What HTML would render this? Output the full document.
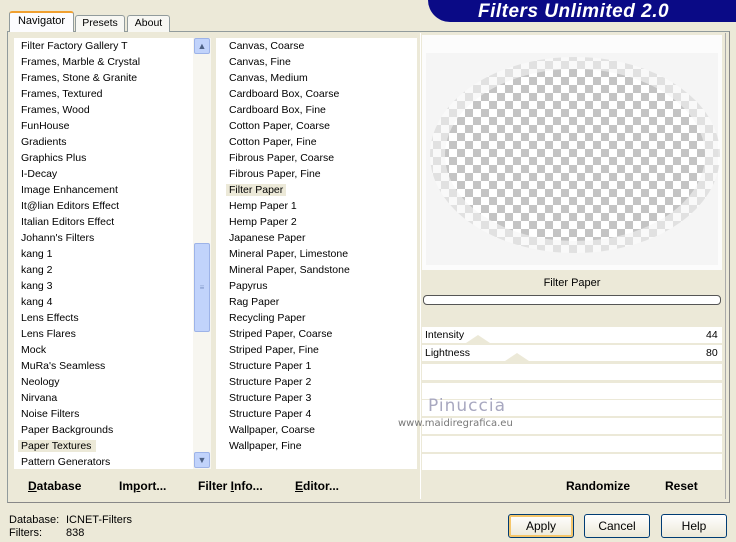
<!DOCTYPE html>
<html><head><style>
*{margin:0;padding:0;box-sizing:border-box}
body{width:736px;height:542px;background:#ece9d8;font-family:"Liberation Sans",sans-serif;font-size:11px;color:#000;position:relative;overflow:hidden}
.a{position:absolute}
.tab{position:absolute;top:15px;height:17px;border:1px solid #919b9c;border-bottom:none;background:#f7f7f3;font-size:11px;text-align:center;line-height:15px;border-radius:3px 3px 0 0}
.list div{height:16px;line-height:16px;padding-left:7px;white-space:nowrap;font-size:10.5px}
.b{font-weight:bold;font-size:12px}
.btn{position:absolute;top:514px;width:66px;height:24px;border:1px solid #003c74;border-radius:3px;background:linear-gradient(#fff,#ece9d8);text-align:center;line-height:22px;font-size:12px}
.row{position:absolute;left:422px;width:300px;background:#fff;height:16px}
</style></head><body>
<div class="a" style="left:428px;top:0;width:308px;height:22px;background:#0a0a86;border-radius:0 0 0 28px"></div>
<div class="a" style="left:478px;top:1px;color:#fff;font-weight:bold;font-style:italic;font-size:19px;letter-spacing:0.5px;line-height:22px">Filters Unlimited 2.0</div>
<div class="a" style="left:7px;top:31px;width:723px;height:472px;border:1px solid #919b9c;border-right-color:#888;border-bottom-color:#888;background:#ece9d8"></div>
<div class="tab" style="left:9px;top:11px;width:65px;height:21px;background:#fcfcfe;border-top:2px solid #f0a030;border-bottom:none;z-index:2;line-height:16px">Navigator</div>
<div class="tab" style="left:75px;width:50px;font-size:10.5px">Presets</div>
<div class="tab" style="left:127px;width:43px;font-size:10.5px">About</div>
<div class="a list" style="left:14px;top:38px;width:179px;height:431px;background:#fff">
<div>Filter Factory Gallery T</div><div>Frames, Marble &amp; Crystal</div><div>Frames, Stone &amp; Granite</div><div>Frames, Textured</div><div>Frames, Wood</div><div>FunHouse</div><div>Gradients</div><div>Graphics Plus</div><div>I-Decay</div><div>Image Enhancement</div><div>It@lian Editors Effect</div><div>Italian Editors Effect</div><div>Johann's Filters</div><div>kang 1</div><div>kang 2</div><div>kang 3</div><div>kang 4</div><div>Lens Effects</div><div>Lens Flares</div><div>Mock</div><div>MuRa's Seamless</div><div>Neology</div><div>Nirvana</div><div>Noise Filters</div><div>Paper Backgrounds</div><div><span style="background:#ece9d8;padding:0 5px 0 3px;margin-left:-3px">Paper Textures</span></div><div>Pattern Generators</div>
</div>
<div class="a" style="left:193px;top:38px;width:18px;height:431px;background:#f7f6f0"></div>
<div class="a" style="left:194px;top:38px;width:16px;height:16px;background:#c1d3fb;border:1px solid #9db3e8;border-radius:2px;color:#4d6185;font-size:9px;text-align:center;line-height:14px">&#9650;</div>
<div class="a" style="left:194px;top:243px;width:16px;height:89px;background:#c1d3fb;border:1px solid #9db3e8;border-radius:2px;color:#7f96c8;font-size:8px;text-align:center;line-height:87px">&#8801;</div>
<div class="a" style="left:194px;top:452px;width:16px;height:16px;background:#c1d3fb;border:1px solid #9db3e8;border-radius:2px;color:#4d6185;font-size:9px;text-align:center;line-height:14px">&#9660;</div>
<div class="a list" style="left:216px;top:38px;width:201px;height:431px;background:#fff;padding-left:6px">
<div>Canvas, Coarse</div><div>Canvas, Fine</div><div>Canvas, Medium</div><div>Cardboard Box, Coarse</div><div>Cardboard Box, Fine</div><div>Cotton Paper, Coarse</div><div>Cotton Paper, Fine</div><div>Fibrous Paper, Coarse</div><div>Fibrous Paper, Fine</div><div><span style="background:#ece9d8;padding:0 3px;margin-left:-3px">Filter Paper</span></div><div>Hemp Paper 1</div><div>Hemp Paper 2</div><div>Japanese Paper</div><div>Mineral Paper, Limestone</div><div>Mineral Paper, Sandstone</div><div>Papyrus</div><div>Rag Paper</div><div>Recycling Paper</div><div>Striped Paper, Coarse</div><div>Striped Paper, Fine</div><div>Structure Paper 1</div><div>Structure Paper 2</div><div>Structure Paper 3</div><div>Structure Paper 4</div><div>Wallpaper, Coarse</div><div>Wallpaper, Fine</div>
</div>
<div class="a" style="left:420px;top:33px;width:306px;height:466px;border-left:1px solid #fff;border-right:1px solid #aaa"></div>
<div class="a" style="left:422px;top:35px;width:300px;height:235px;background:#fcfcfc;overflow:hidden">
<svg width="300" height="235">
<defs>
<pattern id="c" width="16" height="16" patternUnits="userSpaceOnUse" x="3" y="2"><rect width="16" height="16" fill="#fff"/><rect width="8" height="8" fill="#c4c4c4"/><rect x="8" y="8" width="8" height="8" fill="#c4c4c4"/></pattern>
</defs>
<rect x="4" y="18" width="292" height="212" fill="#f5f5f5"/>
<ellipse cx="153" cy="120" rx="145" ry="98" fill="url(#c)" opacity="0.4"/>
<ellipse cx="153" cy="120" rx="130" ry="86" fill="url(#c)"/>
</svg></div>
<div class="a" style="left:422px;top:273px;width:300px;text-align:center;line-height:20px;font-size:11px">Filter Paper</div>
<div class="a" style="left:423px;top:295px;width:298px;height:10px;border:1px solid #555;border-radius:4px;background:#fff"></div>
<div class="row" style="top:327px"></div>
<div class="row" style="top:345px"></div>
<div class="a" style="left:466px;top:335px;width:0;height:0;border:8px solid transparent;border-bottom:8px solid #ece9d8;border-top:none;border-left-width:12px;border-right-width:12px"></div>
<div class="a" style="left:505px;top:353px;width:0;height:0;border:8px solid transparent;border-bottom:8px solid #ece9d8;border-top:none;border-left-width:12px;border-right-width:12px"></div>
<div class="a" style="left:425px;top:327px;line-height:16px;font-size:10.5px">Intensity</div>
<div class="a" style="left:706px;top:327px;line-height:16px;font-size:10.5px">44</div>
<div class="a" style="left:425px;top:345px;line-height:16px;font-size:10.5px">Lightness</div>
<div class="a" style="left:706px;top:345px;line-height:16px;font-size:10.5px">80</div>
<div class="row" style="top:364px"></div>
<div class="row" style="top:383px"></div>
<div class="row" style="top:400px"></div>
<div class="row" style="top:418px"></div>
<div class="row" style="top:436px"></div>
<div class="row" style="top:454px"></div>
<div class="a" style="left:428px;top:396px;font-family:'DejaVu Sans',sans-serif;font-size:17px;color:#a8a8c0;letter-spacing:1px">Pinuccia</div>
<div class="a" style="left:398px;top:418px;font-family:'DejaVu Sans',sans-serif;font-size:10px;color:#777">www.maidiregrafica.eu</div>
<div class="a b" style="left:28px;top:479px"><u>D</u>atabase</div>
<div class="a b" style="left:119px;top:479px">Im<u>p</u>ort...</div>
<div class="a b" style="left:198px;top:479px">Filter <u>I</u>nfo...</div>
<div class="a b" style="left:295px;top:479px"><u>E</u>ditor...</div>
<div class="a b" style="left:566px;top:479px">Randomize</div>
<div class="a b" style="left:665px;top:479px">Reset</div>
<div class="a" style="left:9px;top:514px;line-height:13px">Database:<br>Filters:</div>
<div class="a" style="left:66px;top:514px;line-height:13px">ICNET-Filters<br>838</div>
<div class="btn" style="left:508px;box-shadow:inset 0 0 0 2px #f5c66a">Apply</div>
<div class="btn" style="left:584px">Cancel</div>
<div class="btn" style="left:661px">Help</div>
</body></html>
